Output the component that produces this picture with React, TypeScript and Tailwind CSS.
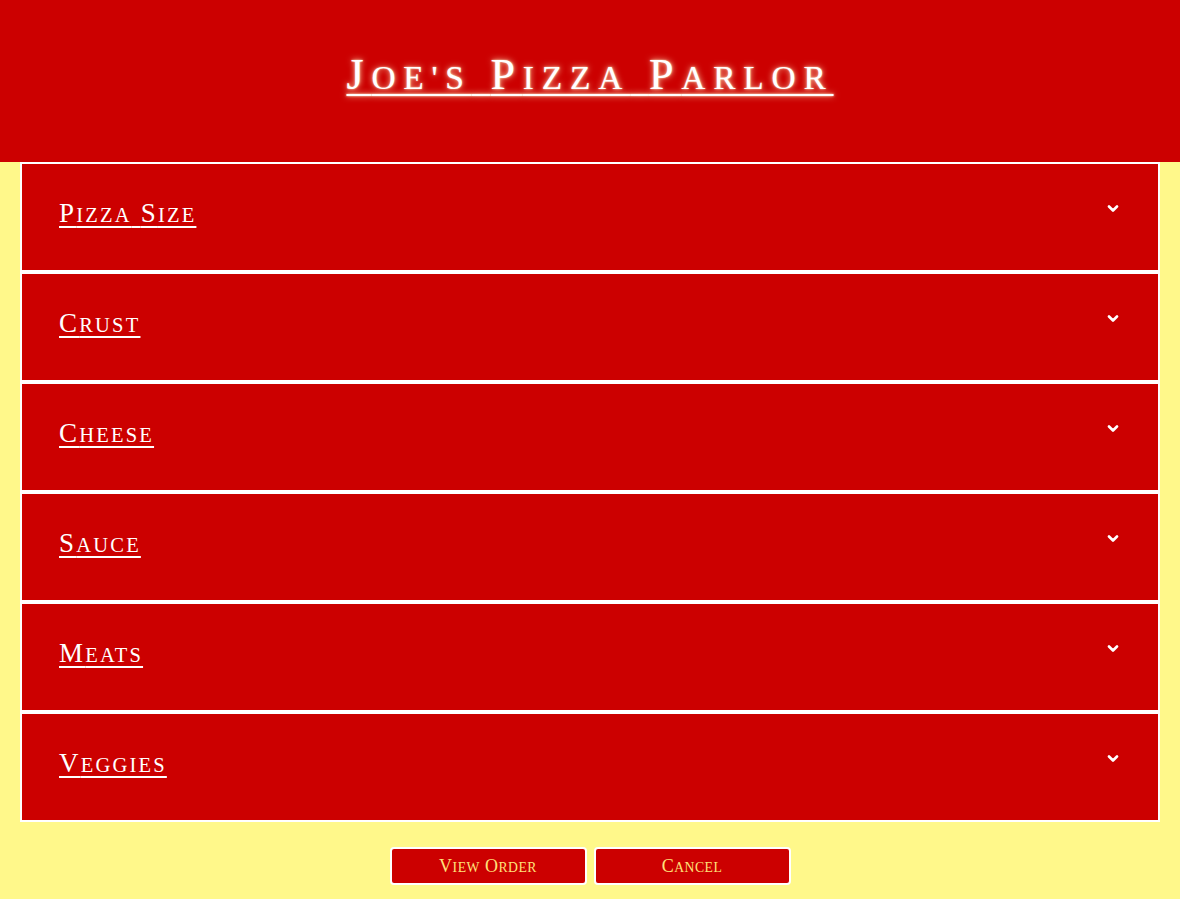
import React from 'react';

const sections = ['Pizza Size', 'Crust', 'Cheese', 'Sauce', 'Meats', 'Veggies'];

// copperplate-style small caps: first letter full size, the rest uppercase and smaller
function SmallCaps({ text }: { text: string }) {
  const words = text.split(' ');
  return (
    <>
      {words.map((w, i) => (
        <React.Fragment key={i}>
          {i > 0 && ' '}
          {w[0]}
          <span className="uppercase text-[0.76em]">{w.slice(1)}</span>
        </React.Fragment>
      ))}
    </>
  );
}

function Chevron() {
  return (
    <svg width="12" height="8" viewBox="0 0 12 8" className="block">
      <polyline points="2,1.5 6,5.5 10,1.5" fill="none" stroke="#ffffff" strokeWidth="2.6" strokeLinecap="round" strokeLinejoin="round" />
    </svg>
  );
}

export default function App() {
  return (
    <div className="min-h-screen bg-[#fff88a] font-['Liberation_Serif',serif]">
      <header className="h-[162px] bg-[#cc0000] flex justify-center">
        <h1 className="mt-[50px] text-[44px] leading-[50px] text-white underline decoration-[2px] underline-offset-[5px] tracking-[7.8px] [text-shadow:0_0_6px_rgba(255,235,190,0.95),0_0_2px_rgba(255,255,220,0.9)]">
          <SmallCaps text="Joe's Pizza Parlor" />
        </h1>
      </header>

      <section className="px-[20px] flex flex-col">
        {sections.map((s) => (
          <div key={s} className="h-[110px] border-2 border-white bg-[#cc0000] flex items-start justify-between pl-[37px] pr-[39px]">
            <span className="mt-[33px] text-[27px] leading-[32px] text-white underline decoration-[1.5px] underline-offset-[4px] tracking-[2.2px]">
              <SmallCaps text={s} />
            </span>
            <span className="mt-[41px]">
              <Chevron />
            </span>
          </div>
        ))}
      </section>

      <div className="flex justify-center gap-[7px] pt-[25px]">
        <button className="w-[197px] h-[38px] rounded-[4px] border-2 border-white bg-[#cc0000] text-[#ffe27a] text-[18px] leading-none tracking-[0.5px]">
          <SmallCaps text="View Order" />
        </button>
        <button className="w-[197px] h-[38px] rounded-[4px] border-2 border-white bg-[#cc0000] text-[#ffe27a] text-[18px] leading-none tracking-[0.5px]">
          <SmallCaps text="Cancel" />
        </button>
      </div>
    </div>
  );
}
